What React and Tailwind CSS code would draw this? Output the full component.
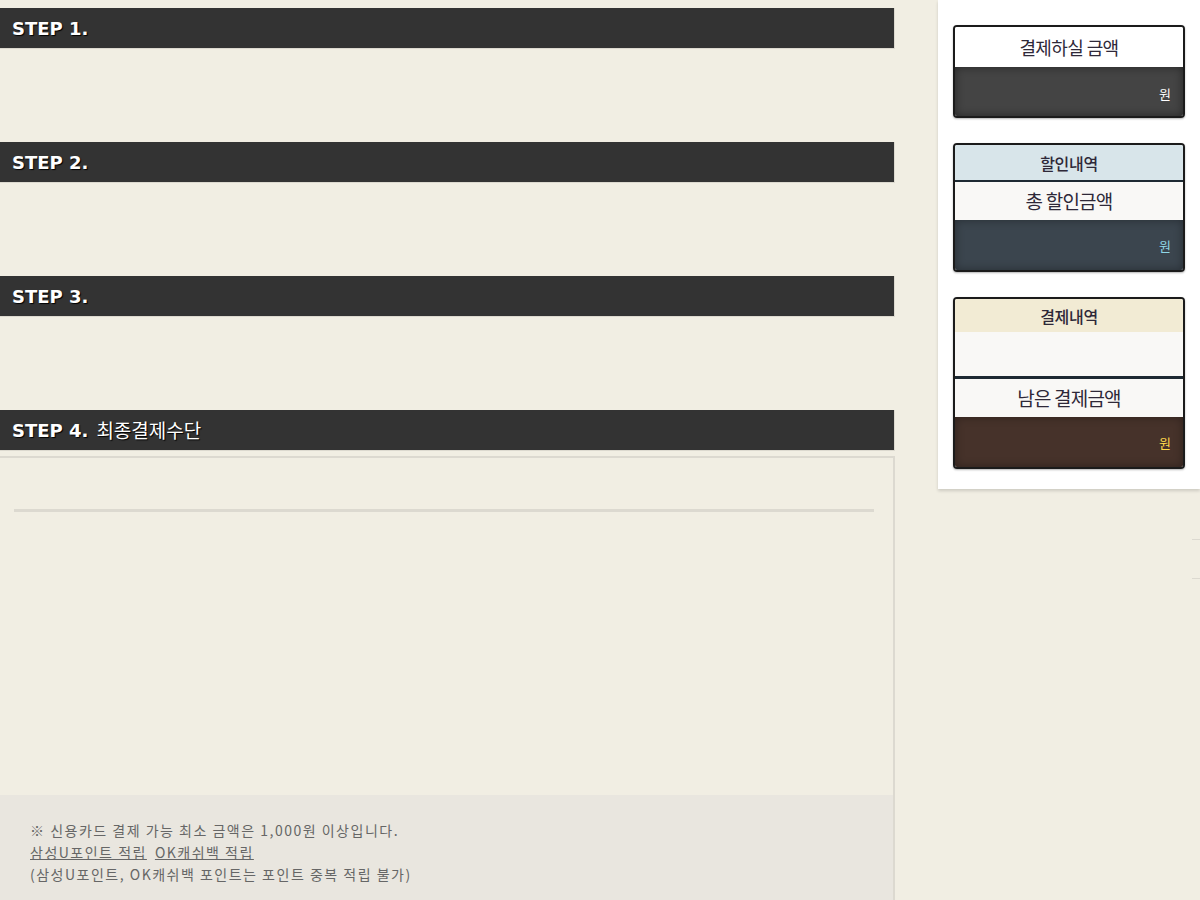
import React from 'react';

const KR = { fontFamily: '"Noto Sans CJK KR", "Noto Sans", sans-serif' };

function StepHeader({ no, title }) {
    return (
        <div className="h-[41px] bg-[#333333] border-r border-b border-[#dcd9cf] flex items-center pl-3 text-white" style={{ textShadow: '1px 1px 1px #000' }}>
            <span className="text-[18px] font-bold" style={{ fontFamily: '"DejaVu Sans", Verdana, sans-serif' }}>STEP {no}.</span>
            {title && <span className="text-[19px] ml-[8px]" style={KR}>{title}</span>}
        </div>
    );
}

function SummaryCard({ children }) {
    return (
        <div className="border-2 border-[#1b1b1b] rounded-[4px] overflow-hidden shadow-[0_1px_2px_rgba(0,0,0,0.3)]">
            {children}
        </div>
    );
}

function App() {
    return (
        <div className="w-[1200px] h-[900px] overflow-hidden bg-[#f1eee3] flex" style={KR}>
            {/* left: steps */}
            <div className="w-[895px] pt-2 flex flex-col">
                <StepHeader no="1" />
                <div className="h-[93px]" />
                <StepHeader no="2" />
                <div className="h-[93px]" />
                <StepHeader no="3" />
                <div className="h-[93px]" />
                <StepHeader no="4" title="최종결제수단" />
                <div className="mt-[5px] flex-1 border-t-2 border-r-2 border-[#dcd9d0] flex flex-col">
                    <div className="pt-[51px] px-[14px] pr-[19px]">
                        <div className="h-[3px] bg-[#dcd9d0]" />
                    </div>
                    <div className="flex-1" />
                    <div className="h-[105px] bg-[#e9e6df] pl-[30px] pt-6 text-[14px] leading-[22px] text-[#666] tracking-[1.5px]">
                        <p>※ 신용카드 결제 가능 최소 금액은 1,000원 이상입니다.</p>
                        <p>
                            <a className="underline">삼성U포인트 적립</a>
                            <a className="underline ml-[8px]">OK캐쉬백 적립</a>
                        </p>
                        <p>(삼성U포인트, OK캐쉬백 포인트는 포인트 중복 적립 불가)</p>
                    </div>
                </div>
            </div>

            {/* right: summary */}
            <div className="flex-1 flex flex-col pl-[43px]">
                <div className="bg-white h-[489px] px-[15px] pt-[25px] flex flex-col gap-[25px] shadow-[0_2px_3px_rgba(0,0,0,0.15)]">
                    <SummaryCard>
                        <div className="h-10 bg-white flex items-center justify-center text-[18px] text-[#2e2838] tracking-[-0.6px]">결제하실 금액</div>
                        <div className="h-[49px] bg-[#444] shadow-[inset_0_0_10px_rgba(0,0,0,0.45)] flex items-center justify-end pr-[12px] pt-[4px] text-[13px] text-white">원</div>
                    </SummaryCard>
                    <SummaryCard>
                        <div className="h-[37px] bg-[#d8e5ea] flex items-center justify-center text-[16px] font-medium text-[#2e2838] tracking-[-0.3px] border-b-2 border-[#1e2a33]">할인내역</div>
                        <div className="h-[38px] bg-[#f9f8f6] flex items-center justify-center text-[19px] text-[#2e2838] tracking-[-0.8px]">총 할인금액</div>
                        <div className="h-[50px] bg-[#3b454e] shadow-[inset_0_0_10px_rgba(0,0,0,0.35)] flex items-center justify-end pr-[12px] pt-[2px] text-[13px] text-[#8fd6e6]">원</div>
                    </SummaryCard>
                    <SummaryCard>
                        <div className="h-[33px] bg-[#f2ebd4] flex items-center justify-center text-[16px] font-medium text-[#2e2838] tracking-[-0.3px]">결제내역</div>
                        <div className="h-[47px] bg-[#f9f8f6] border-b-[3px] border-[#1e2a33]" />
                        <div className="h-[38px] bg-[#f9f8f6] flex items-center justify-center text-[19px] text-[#2e2838] tracking-[-0.8px]">남은 결제금액</div>
                        <div className="h-[50px] bg-[#46322a] shadow-[inset_0_0_10px_rgba(0,0,0,0.35)] flex items-center justify-end pr-[12px] pt-[2px] text-[13px] text-[#ffd94a]">원</div>
                    </SummaryCard>
                </div>
                <div className="mt-[50px] flex flex-col items-end gap-[38px]">
                    <div className="w-2 h-px bg-[#dcd9d0]" />
                    <div className="w-2 h-px bg-[#dcd9d0]" />
                </div>
            </div>
        </div>
    );
}

export default App;
